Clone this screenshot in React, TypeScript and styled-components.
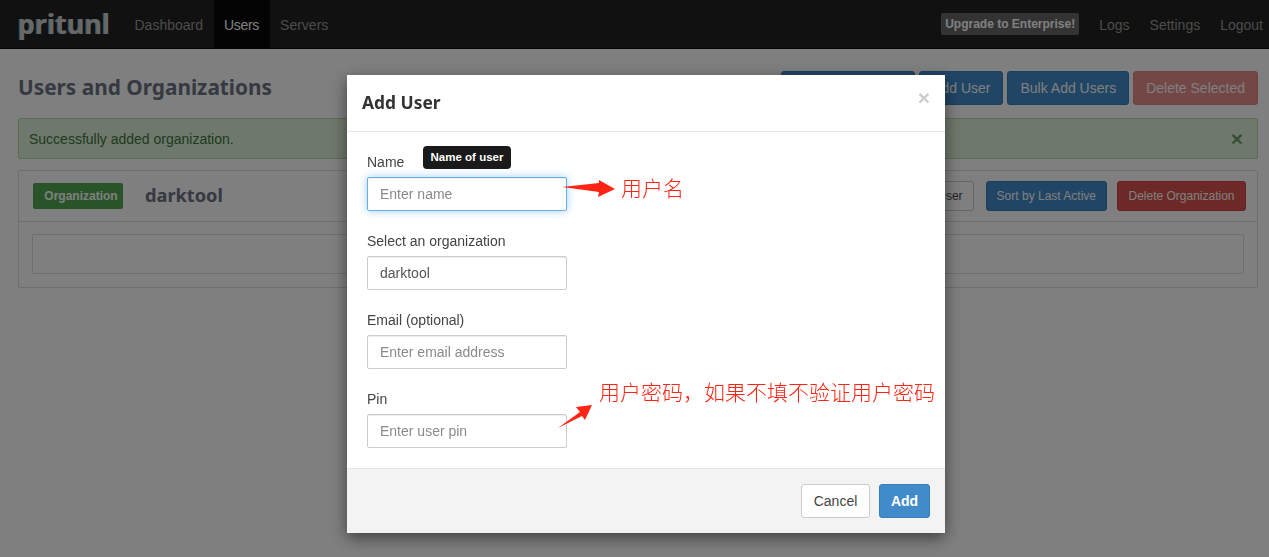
import React from 'react';
import styled, { createGlobalStyle } from 'styled-components';

const GlobalStyle = createGlobalStyle`
  html, body {
    margin: 0;
    padding: 0;
    height: 100%;
    background: #fff;
    font-family: "Liberation Sans", Arial, sans-serif;
    font-size: 14px;
    line-height: 20px;
    color: #333;
    overflow: hidden;
  }
  * { box-sizing: border-box; }
`;

const headingFont = `"Noto Sans", "Open Sans", sans-serif`;

const Navbar = styled.nav`
  height: 49px;
  background: #222;
  border-bottom: 1px solid #080808;
  display: flex;
  align-items: stretch;
  padding-left: 18px;
`;

const Logo = styled.div`
  font-family: ${headingFont};
  font-weight: 700;
  font-size: 27px;
  line-height: 47px;
  width: 106px;
  color: #cfd0cf;
  text-shadow: -1px 0 0 #6fa6c4;
`;

const NavLink = styled.a<{ $active?: boolean }>`
  display: flex;
  align-items: center;
  padding: 2px 10.5px 0;
  color: ${p => (p.$active ? '#fff' : '#999')};
  background: ${p => (p.$active ? '#080808' : 'transparent')};
  letter-spacing: ${p => (p.$active ? '-0.3px' : '0')};
`;

const NavRight = styled.div`
  margin-left: auto;
  display: flex;
  align-items: stretch;
  padding-right: 6px;
`;

const RightLink = styled.a`
  display: flex;
  align-items: center;
  padding: 2px 10px 0;
  color: #999;
  &:last-child { padding-right: 0; }
`;

const UpgradeBox = styled.span`
  align-self: flex-start;
  margin: 13px 10px 0 0;
  height: 22px;
  padding: 0 4px;
  border-radius: 2px;
  background: #666;
  color: #fff;
  font-size: 12px;
  font-weight: 700;
  line-height: 22px;
`;

const Page = styled.main`
  padding: 22px 11px 0 18px;
`;

const TopRow = styled.div`
  display: flex;
  align-items: center;
  justify-content: space-between;
  height: 34px;
  margin-bottom: 13px;
`;

const PageTitle = styled.h1`
  margin: 0 0 3px;
  font-family: ${headingFont};
  font-weight: 700;
  font-size: 20.8px;
  line-height: 32px;
  color: #6c7282;
`;

const ButtonRow = styled.div`
  display: flex;
  gap: 4px;
`;

const colorOf = { primary: '#428bca', danger: '#d9534f', success: '#5cb85c', default: '#fff' };
const borderOf = { primary: '#357ebd', danger: '#d43f3a', success: '#4cae4c', default: '#ccc' };

type Kind = keyof typeof colorOf;

const Button = styled.button<{ $kind: Kind; $small?: boolean; $disabled?: boolean }>`
  font-family: inherit;
  font-size: ${p => (p.$small ? '12px' : '14px')};
  line-height: 20px;
  height: ${p => (p.$small ? '30px' : '34px')};
  padding: ${p => (p.$small ? '0 10px' : '0 12px')};
  border-radius: 3px;
  border: 1px solid ${p => borderOf[p.$kind]};
  background: ${p => colorOf[p.$kind]};
  color: ${p => (p.$kind === 'default' ? '#444' : '#fff')};
  opacity: ${p => (p.$disabled ? 0.65 : 1)};
  white-space: nowrap;
`;

const CancelButton = styled(Button)`
  width: 69px;
  padding: 0;
`;

const AddButton = styled(Button)`
  width: 51px;
  padding: 0;
  font-weight: 700;
`;

const Alert = styled.div`
  height: 41px;
  border: 1px solid #b7dca0;
  border-radius: 2px;
  background: #dff0d8;
  color: #3c763d;
  display: flex;
  align-items: center;
  justify-content: space-between;
  padding: 0 14px 0 10px;
  margin-bottom: 11px;
`;

const AlertClose = styled.span`
  font-size: 21px;
  font-weight: 700;
  color: #3c763d;
  opacity: 0.7;
`;

const Panel = styled.section`
  height: 118px;
  border: 1px solid #ddd;
  border-radius: 2px;
`;

const PanelHeading = styled.div`
  height: 51px;
  border-bottom: 1px solid #ddd;
  display: flex;
  align-items: center;
  padding: 0 11px 0 14px;
`;

const OrgLabel = styled.span`
  display: inline-block;
  width: 90px;
  height: 26px;
  padding-left: 6px;
  line-height: 27px;
  text-align: center;
  border-radius: 2px;
  background: #52a852;
  color: #fff;
  font-size: 12px;
  font-weight: 700;
`;

const OrgName = styled.h2`
  margin: 0 0 2px 22px;
  font-family: ${headingFont};
  font-weight: 700;
  font-size: 18.2px;
  color: #6c7282;
`;

const HeadingButtons = styled.div`
  margin-left: auto;
  display: flex;
  gap: 12px;
  & > button:last-child {
    margin-left: -2px;
    width: 129px;
    padding: 0;
  }
`;

const PanelBody = styled.div`
  padding: 12px 13px;
`;

const EmptyBox = styled.div`
  height: 40px;
  border: 1px solid #ddd;
  border-radius: 2px;
`;

const Backdrop = styled.div`
  position: fixed;
  inset: 0;
  background: rgba(0, 0, 0, 0.5);
  padding: 75px 0 0 347px;
`;

const Modal = styled.div`
  position: relative;
  width: 598px;
  height: 458px;
  background: #fff;
  box-shadow: 0 5px 15px rgba(0, 0, 0, 0.5);
  display: flex;
  flex-direction: column;
`;

const ModalHeader = styled.header`
  height: 57px;
  border-bottom: 1px solid #e5e5e5;
  display: flex;
  align-items: center;
  justify-content: space-between;
  padding: 0 15px;
`;

const ModalTitle = styled.h4`
  margin: 0 0 2px;
  font-family: ${headingFont};
  font-weight: 700;
  font-size: 17.4px;
  color: #333;
`;

const ModalClose = styled.span`
  font-size: 21px;
  font-weight: 700;
  color: #ccc;
  margin: -10px 0 0 0;
`;

const ModalBody = styled.div`
  flex: 1;
  padding: 20px 20px 0;
`;

const FormGroup = styled.div`
  margin-bottom: 20px;
  width: 200px;
`;

const Label = styled.label`
  display: block;
  color: #444;
  line-height: 20px;
  margin-bottom: 5px;
`;

const Input = styled.input<{ $focused?: boolean }>`
  display: block;
  width: 200px;
  height: 34px;
  padding: 6px 12px;
  font-family: inherit;
  font-size: 14px;
  color: #555;
  border-radius: 2px;
  border: 1px solid ${p => (p.$focused ? '#66afe9' : '#ccc')};
  box-shadow: ${p =>
    p.$focused
      ? 'inset 0 1px 1px rgba(0,0,0,.075), 0 0 8px rgba(102,175,233,.6)'
      : 'inset 0 1px 1px rgba(0,0,0,.075)'};
  outline: none;
  &::placeholder { color: #8a8a8a; opacity: 1; }
`;

const ModalFooter = styled.footer`
  height: 65px;
  border-top: 1px solid #e5e5e5;
  background: #f3f3f3;
  display: flex;
  justify-content: flex-end;
  align-items: flex-start;
  gap: 9px;
  padding: 15px 15px 0;
`;

const Tooltip = styled.div`
  position: absolute;
  left: 76px;
  top: 71px;
  width: 88px;
  height: 23px;
  border-radius: 4px;
  background: #1a1a1a;
  color: #fff;
  font-size: 11.5px;
  font-weight: 700;
  line-height: 22px;
  text-align: center;
`;

const Note = styled.span<{ $left: number; $top: number }>`
  position: absolute;
  left: ${p => p.$left}px;
  top: ${p => p.$top}px;
  font-family: "Noto Sans CJK SC", sans-serif;
  font-weight: 300;
  font-size: 21px;
  line-height: 26px;
  color: #ff2413;
  white-space: nowrap;
`;

const ArrowSvg = styled.svg`
  position: absolute;
  left: 0;
  top: 0;
  width: 598px;
  height: 458px;
  pointer-events: none;
`;

export default function App() {
  return (
    <>
      <GlobalStyle />
      <Navbar>
        <Logo>pritunl</Logo>
        <NavLink>Dashboard</NavLink>
        <NavLink $active>Users</NavLink>
        <NavLink>Servers</NavLink>
        <NavRight>
          <UpgradeBox>Upgrade to Enterprise!</UpgradeBox>
          <RightLink>Logs</RightLink>
          <RightLink>Settings</RightLink>
          <RightLink>Logout</RightLink>
        </NavRight>
      </Navbar>
      <Page>
        <TopRow>
          <PageTitle>Users and Organizations</PageTitle>
          <ButtonRow>
            <Button $kind="primary">Add Organization</Button>
            <Button $kind="primary">Add User</Button>
            <Button $kind="primary">Bulk Add Users</Button>
            <Button $kind="danger" $disabled>Delete Selected</Button>
          </ButtonRow>
        </TopRow>
        <Alert>
          <span>Successfully added organization.</span>
          <AlertClose>×</AlertClose>
        </Alert>
        <Panel>
          <PanelHeading>
            <OrgLabel>Organization</OrgLabel>
            <OrgName>darktool</OrgName>
            <HeadingButtons>
              <Button $kind="default" $small>Add User</Button>
              <Button $kind="primary" $small>Sort by Last Active</Button>
              <Button $kind="danger" $small>Delete Organization</Button>
            </HeadingButtons>
          </PanelHeading>
          <PanelBody>
            <EmptyBox />
          </PanelBody>
        </Panel>
      </Page>
      <Backdrop>
        <Modal>
          <ModalHeader>
            <ModalTitle>Add User</ModalTitle>
            <ModalClose>×</ModalClose>
          </ModalHeader>
          <ModalBody>
            <FormGroup>
              <Label>Name</Label>
              <Input $focused placeholder="Enter name" />
            </FormGroup>
            <FormGroup>
              <Label>Select an organization</Label>
              <Input defaultValue="darktool" />
            </FormGroup>
            <FormGroup>
              <Label>Email (optional)</Label>
              <Input placeholder="Enter email address" />
            </FormGroup>
            <FormGroup>
              <Label>Pin</Label>
              <Input placeholder="Enter user pin" />
            </FormGroup>
          </ModalBody>
          <ModalFooter>
            <CancelButton $kind="default">Cancel</CancelButton>
            <AddButton $kind="primary">Add</AddButton>
          </ModalFooter>
          <Tooltip>Name of user</Tooltip>
          <ArrowSvg viewBox="0 0 598 458">
            <polygon points="215,112 252,108 252,105 268,114 251,122 252,117" fill="#ff2413" />
            <polygon points="211,353 233,337 229,332 245,330 238,345 235,341" fill="#ff2413" />
          </ArrowSvg>
          <Note $left={274} $top={99}>用户名</Note>
          <Note $left={252} $top={303}>用户密码，如果不填不验证用户密码</Note>
        </Modal>
      </Backdrop>
    </>
  );
}
